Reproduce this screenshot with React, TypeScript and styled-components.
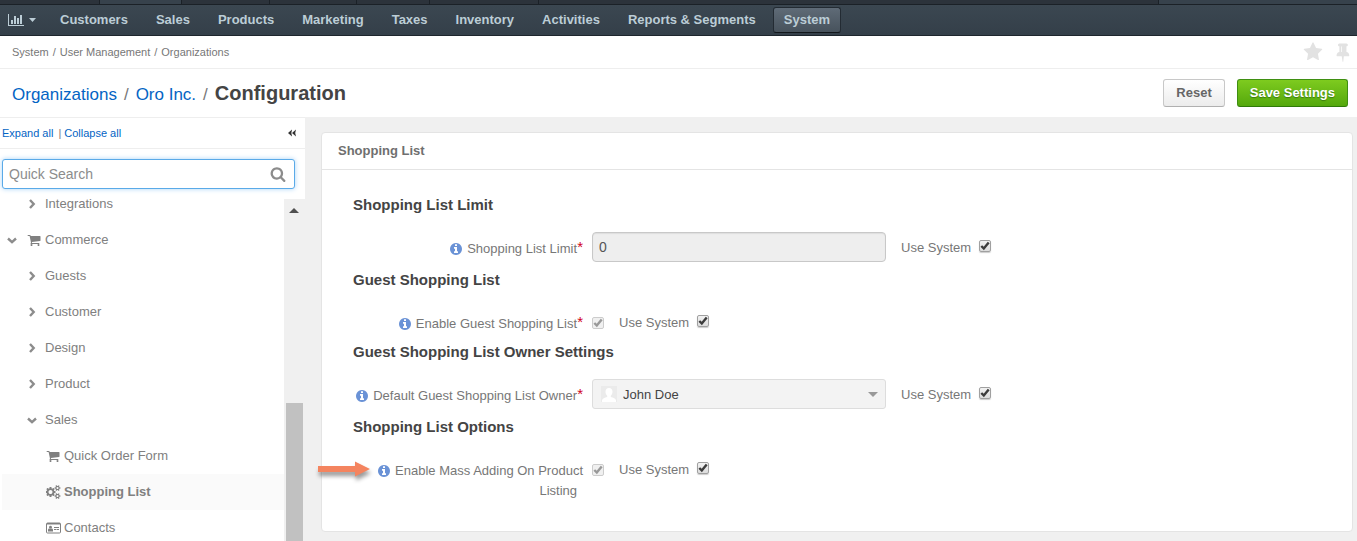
import React, { useState } from "react";
import styled, { createGlobalStyle } from "styled-components";

const GlobalStyle = createGlobalStyle`
  *, *::before, *::after { box-sizing: border-box; }
  body {
    margin: 0;
    background: #f0f0f0;
    color: #777;
    font: 13px/20px "Liberation Sans", Arial, sans-serif;
  }
  a { color: #0464c4; text-decoration: none; }
  ul, ol, h1, h2, h3 { margin: 0; padding: 0; list-style: none; font-weight: normal; }
  input, button, select { font-family: inherit; margin: 0; }
`;

/* ---------- icons ---------- */

type GlyphProps = { size?: number; box?: number; d: string };

const Glyph = ({ size = 14, box = 1792, d }: GlyphProps) => (
  <svg
    width={Math.round((size * box) / 1792)}
    height={size}
    viewBox={`0 0 ${box} 1792`}
    fill="currentColor"
    aria-hidden="true"
  >
    <path d={d} />
  </svg>
);

const paths = {
  chart:
    "M640 896v512h-256v-512h256zm384-512v1024h-256v-1024h256zm1024 1152v128h-2048v-1536h128v1408h1920zm-640-896v768h-256v-768h256zm384-384v1152h-256v-1152h256z",
  star: "M1728 647q0 22-26 48l-363 354 86 500q1 7 1 20 0 21-10.5 35.5t-30.5 14.5q-19 0-40-12l-449-236-449 236q-22 12-40 12-21 0-31.5-14.5t-10.5-35.5q0-6 2-20l86-500-364-354q-25-27-25-48 0-37 56-46l502-73 225-455q19-41 49-41t49 41l225 455 502 73q56 9 56 46z",
  pin: "M800 864v-448q0-14-9-23t-23-9-23 9-9 23v448q0 14 9 23t23 9 23-9 9-23zm672 352q0 26-19 45t-45 19h-429l-51 483q-2 12-10.5 20.5t-20.5 8.5h-1q-27 0-32-27l-76-485h-404q-26 0-45-19t-19-45q0-123 78.5-221.5t177.5-98.5v-512q-52 0-90-38t-38-90 38-90 90-38h640q52 0 90 38t38 90-38 90-90 38v512q99 0 177.5 98.5t78.5 221.5z",
  search:
    "M1216 832q0-185-131.5-316.5t-316.5-131.5-316.5 131.5-131.5 316.5 131.5 316.5 316.5 131.5 316.5-131.5 131.5-316.5zm512 832q0 52-38 90t-90 38q-54 0-90-38l-343-342q-179 124-399 124-143 0-273.5-55.5t-225-150-150-225-55.5-273.5 55.5-273.5 150-225 225-150 273.5-55.5 273.5 55.5 225 150 150 225 55.5 273.5q0 220-124 399l343 343q37 37 37 90z",
  cart: "M704 1536q0 52-38 90t-90 38-90-38-38-90 38-90 90-38 90 38 38 90zm896 0q0 52-38 90t-90 38-90-38-38-90 38-90 90-38 90 38 38 90zm128-1088v512q0 24-16.5 42.5t-40.5 21.5l-1044 122q13 60 13 70 0 16-24 64h920q26 0 45 19t19 45-19 45-45 19h-1024q-26 0-45-19t-19-45q0-11 8-31.5t16-36 21.5-40 15.5-29.5l-177-823h-204q-26 0-45-19t-19-45 19-45 45-19h256q16 0 28.5 6.5t19.5 15.5 13 24.5 8 26 5.5 29.5 4.5 26h1201q26 0 45 19t19 45z",
  info: "M1152 1376v-160q0-14-9-23t-23-9h-96v-512q0-14-9-23t-23-9h-320q-14 0-23 9t-9 23v160q0 14 9 23t23 9h96v320h-96q-14 0-23 9t-9 23v160q0 14 9 23t23 9h448q14 0 23-9t9-23zm-128-896v-160q0-14-9-23t-23-9h-192q-14 0-23 9t-9 23v160q0 14 9 23t23 9h192q14 0 23-9t9-23zm640 416q0 209-103 385.5t-279.5 279.5-385.5 103-385.5-103-279.5-279.5-103-385.5 103-385.5 279.5-279.5 385.5-103 385.5 103 279.5 279.5 103 385.5z",
  cogs: "M832 896q0-106-75-181t-181-75-181 75-75 181 75 181 181 75 181-75 75-181zm768 512q0-52-38-90t-90-38-90 38-38 90q0 53 37.5 90.5t90.5 37.5 90.5-37.5 37.5-90.5zm0-1024q0-52-38-90t-90-38-90 38-38 90q0 53 37.5 90.5t90.5 37.5 90.5-37.5 37.5-90.5zm-384 421v185q0 10-7 19.5t-16 10.5l-155 24q-11 35-32 76 34 48 90 115 7 11 7 20 0 12-7 19-23 30-82.5 89.5t-78.5 59.5q-11 0-21-7l-115-90q-37 19-77 31-11 108-23 155-7 24-30 24h-186q-11 0-20-7.5t-10-17.5l-23-153q-34-10-75-31l-118 89q-7 7-20 7-11 0-21-8-144-133-144-160 0-9 7-19 10-14 41-53t47-61q-23-44-35-82l-152-24q-10-1-17-9.5t-7-19.5v-185q0-10 7-19.5t16-10.5l155-24q11-35 32-76-34-48-90-115-7-11-7-20 0-12 7-20 22-30 82-89t79-59q11 0 21 7l115 90q34-18 77-32 11-108 23-154 7-24 30-24h186q11 0 20 7.5t10 17.5l23 153q34 10 75 31l118-89q8-7 20-7 11 0 21 8 144 133 144 160 0 8-7 19-12 16-42 54t-45 60q23 48 34 82l152 23q10 2 17 10.5t7 19.5zm640 533v140q0 16-149 31-12 27-30 52 51 113 51 138 0 4-4 7-122 71-124 71-8 0-46-47t-52-68q-20 2-30 2t-30-2q-14 21-52 68t-46 47q-2 0-124-71-4-3-4-7 0-25 51-138-18-25-30-52-149-15-149-31v-140q0-16 149-31 13-29 30-52-51-113-51-138 0-4 4-7 4-2 35-20t59-34 30-16q8 0 46 46.5t52 67.5q20-2 30-2t30 2q51-71 92-112l6-2q4 0 124 70 4 3 4 7 0 25-51 138 17 23 30 52 149 15 149 31zm0-1024v140q0 16-149 31-12 27-30 52 51 113 51 138 0 4-4 7-122 71-124 71-8 0-46-47t-52-68q-20 2-30 2t-30-2q-14 21-52 68t-46 47q-2 0-124-71-4-3-4-7 0-25 51-138-18-25-30-52-149-15-149-31v-140q0-16 149-31 13-29 30-52-51-113-51-138 0-4 4-7 4-2 35-20t59-34 30-16q8 0 46 46.5t52 67.5q20-2 30-2t30 2q51-71 92-112l6-2q4 0 124 70 4 3 4 7 0 25-51 138 17 23 30 52 149 15 149 31z",
};

const CardIcon = () => (
  <svg width="15" height="12" viewBox="0 0 15 12" aria-hidden="true">
    <rect x="0.5" y="1" width="14" height="10" rx="1" fill="none" stroke="currentColor" />
    <path d="M1 1h13v1.5H1z" fill="currentColor" />
    <circle cx="4.5" cy="5.2" r="1.4" fill="currentColor" />
    <path d="M2 9.500V8c0-1 .6-1.500 1.300-1.500h2.400C6.400 6.500 7 7 7 8v1.500z" fill="currentColor" />
    <path d="M8 5.500h5M8 7.500h2.500M11 7.500h2" stroke="currentColor" />
  </svg>
);

const Chevron = ({ open }: { open?: boolean }) => (
  <svg width="10" height="10" viewBox="0 0 10 10" fill="none" stroke="currentColor" strokeWidth="2.4" aria-hidden="true">
    {open ? <path d="M1 3.500l4 3.700 4-3.700" /> : <path d="M3 1l3.700 4L3 9" />}
  </svg>
);

const Caret = ({ width, height }: { width: number; height: number }) => (
  <svg width={width} height={height} viewBox="0 0 10 5" preserveAspectRatio="none" fill="currentColor" aria-hidden="true">
    <path d="M0 0h10L5 5z" />
  </svg>
);

const CollapseIcon = () => (
  <svg width="8" height="8" viewBox="0 0 8 8" fill="#333" aria-hidden="true">
    <path d="M4 0.500L3.400 4 4 7.500 0 4zM8 0.500L7.200 4 8 7.500 4 4z" />
  </svg>
);

/* ---------- page frame ---------- */

const Page = styled.div`
  display: flex;
  flex-direction: column;
  height: 100vh;
  overflow: hidden;
`;

const TabStrip = styled.div`
  display: flex;
  height: 5px;
  background: #2c333b;
  border-bottom: 1px solid #1b2127;
`;

const TabEdge = styled.div<{ $width?: number; $light?: boolean }>`
  flex: ${(p) => (p.$width ? `0 0 ${p.$width}px` : "1 1 0")};
  background: ${(p) => (p.$light ? "#37424c" : "#2c333b")};
  border-right: 1px solid ${(p) => (p.$width ? "#1b2127" : "transparent")};
`;

const NavBar = styled.nav`
  display: flex;
  align-items: center;
  height: 31px;
  padding-left: 8px;
  background: linear-gradient(#3b4751, #343f49);
  border-bottom: 1px solid #1e262d;
`;

const DashboardButton = styled.button`
  display: flex;
  align-items: center;
  gap: 5px;
  width: 41px;
  padding: 0;
  border: 0;
  background: none;
  color: #bccdd6;
  cursor: pointer;
`;

const NavList = styled.ul`
  display: flex;
  gap: 6px;
`;

const NavLink = styled.a<{ $active?: boolean }>`
  display: block;
  padding: 2px 10px;
  border: 1px solid ${(p) => (p.$active ? "#232b33" : "transparent")};
  border-bottom-color: ${(p) => (p.$active ? "#12171b" : "transparent")};
  border-radius: 3px;
  background: ${(p) => (p.$active ? "linear-gradient(#5f6b77, #47525c)" : "none")};
  color: #bccdd6;
  font-weight: bold;
  white-space: nowrap;
`;

const CrumbBar = styled.div`
  display: flex;
  align-items: center;
  justify-content: space-between;
  height: 33px;
  padding: 0 7px 0 12px;
  background: #fff;
  border-bottom: 1px solid #eee;
`;

const Crumbs = styled.ol`
  display: flex;
  gap: 4px;
  font-size: 11px;
`;

const CrumbTools = styled.div`
  display: flex;
  gap: 10px;
`;

const ToolButton = styled.button`
  display: flex;
  padding: 0;
  border: 0;
  background: none;
  color: #e2e2e2;
  cursor: pointer;
`;

const TitleBar = styled.header`
  display: flex;
  align-items: center;
  justify-content: space-between;
  height: 48px;
  padding: 0 9px 0 12px;
  background: #fff;
`;

const TitlePath = styled.div`
  display: flex;
  align-items: baseline;
  gap: 7px;
  padding-top: 2px;
  font-size: 17px;
  line-height: 24px;
`;

const Title = styled.h1`
  color: #444;
  font-size: 20px;
  font-weight: bold;
`;

const Actions = styled.div`
  display: flex;
  gap: 12px;
`;

const Button = styled.button<{ $primary?: boolean }>`
  height: 28px;
  padding: 0 12px 1px;
  border: 1px solid ${(p) => (p.$primary ? "#3f8f12" : "#c8c8c8")};
  border-bottom-color: ${(p) => (p.$primary ? "#2f7a08" : "#b0b0b0")};
  border-radius: 3px;
  background: ${(p) => (p.$primary ? "linear-gradient(#7ecb1f, #54a80c)" : "linear-gradient(#fff, #ececec)")};
  color: ${(p) => (p.$primary ? "#fff" : "#666")};
  text-shadow: ${(p) => (p.$primary ? "0 1px 1px #3b7a10" : "none")};
  font-size: 13px;
  font-weight: bold;
  cursor: pointer;
`;

const Content = styled.div`
  display: flex;
  flex: 1;
  min-height: 0;
`;

/* ---------- sidebar ---------- */

const Sidebar = styled.aside`
  display: flex;
  flex-direction: column;
  flex: 0 0 305px;
  background: #fff;
  border-top: 1px solid #eee;
`;

const SidebarTools = styled.div`
  display: flex;
  align-items: center;
  justify-content: space-between;
  height: 31px;
  padding: 0 9px 0 2px;
  border-bottom: 1px solid #eee;
  font-size: 11px;
`;

const ToolLinks = styled.div`
  display: flex;
`;

const Divider = styled.span`
  margin: 0 3px 0 5px;
`;

const SearchBox = styled.label`
  position: relative;
  display: block;
  padding: 10px 10px 10px 2px;
`;

const SearchInput = styled.input`
  display: block;
  width: 100%;
  height: 30px;
  padding: 0 30px 0 6px;
  border: 1px solid #5aaae8;
  border-radius: 3px;
  outline: 0;
  box-shadow: 0 0 5px #a9d4f7;
  color: #555;
  font-size: 14px;
  &::placeholder { color: #8c8c8c; opacity: 1; }
`;

const SearchIcon = styled.span`
  position: absolute;
  right: 19px;
  top: 17px;
  display: flex;
  color: #8c8c8c;
`;

const TreeArea = styled.div`
  display: flex;
  flex: 1;
  min-height: 0;
  overflow: hidden;
`;

const Tree = styled.ul`
  flex: 1;
  margin-top: -13px;
  padding-left: 2px;
`;

const TreeRow = styled.a<{ $level: number; $active?: boolean }>`
  display: flex;
  align-items: center;
  height: 36px;
  padding-left: ${(p) => [5, 25, 42][p.$level]}px;
  background: ${(p) => (p.$active ? "#fafafa" : "none")};
  color: #808080;
  font-weight: ${(p) => (p.$active ? "bold" : "normal")};
`;

const ToggleSlot = styled.span`
  display: flex;
  width: 10px;
  margin-right: 8px;
  color: #8c8c8c;
`;

const IconSlot = styled.span`
  display: flex;
  justify-content: center;
  width: 18px;
  margin-right: 2px;
`;

const ScrollTrack = styled.div`
  display: flex;
  flex-direction: column;
  justify-content: space-between;
  width: 21px;
  padding: 9px 2px 0;
  background: #f0f0f0;
  color: #505050;
`;

const ScrollUp = styled.span`
  display: flex;
  justify-content: center;
  transform: rotate(180deg);
`;

const ScrollThumb = styled.div`
  width: 17px;
  height: 41.5%;
  background: #c1c1c1;
`;

/* ---------- settings panel ---------- */

const Main = styled.main`
  flex: 1;
  min-width: 0;
  padding: 15px 4px 9px 16px;
`;

const Panel = styled.section`
  background: #fff;
  border: 1px solid #e4e4e4;
  border-radius: 4px;
`;

const PanelTitle = styled.h2`
  padding: 8px 16px;
  border-bottom: 1px solid #e4e4e4;
  color: #6f6f6f;
  font-size: 13px;
  font-weight: bold;
`;

const PanelBody = styled.div`
  padding: 25px 31px 22px;
`;

const GroupTitle = styled.h3`
  color: #444;
  font-size: 15px;
  font-weight: bold;
`;

const Field = styled.div`
  position: relative;
  display: flex;
  align-items: flex-start;
  min-height: 27px;
  margin: 17px 0 8px;
`;

const FieldLabel = styled.label`
  width: 230px;
  margin-right: 9px;
  padding-top: 7px;
  text-align: right;
`;

const InfoMark = styled.span`
  display: inline-block;
  height: 14px;
  margin-right: 4px;
  color: #6a92d6;
  vertical-align: -3px;
  svg { display: block; }
`;

const Required = styled.em`
  display: inline-block;
  width: 6px;
  color: #d0021b;
  font-size: 15px;
  font-style: normal;
  line-height: 12px;
  vertical-align: 1px;
`;

const ValueInput = styled.input`
  width: 294px;
  height: 30px;
  padding: 0 6px;
  border: 1px solid #c8c8c8;
  border-radius: 4px;
  background: #eee;
  box-shadow: inset 0 1px 1px #ddd;
  color: #555;
  font-size: 14px;
`;

const SelectBox = styled.div`
  position: relative;
  width: 294px;
`;

const Select = styled.select`
  display: block;
  appearance: none;
  width: 100%;
  height: 30px;
  padding: 0 30px;
  border: 1px solid #ddd;
  border-radius: 3px;
  background: #f3f3f3;
  color: #444;
  font-size: 13px;
  opacity: 1;
`;

const Avatar = styled.svg`
  position: absolute;
  left: 9px;
  top: 7px;
`;

const SelectCaret = styled.span`
  position: absolute;
  right: 8px;
  top: 13px;
  display: flex;
  color: #999;
`;

const TickBox = styled.span<{ $offset: number }>`
  position: relative;
  display: block;
  width: 12px;
  height: 12px;
  margin-top: ${(p) => p.$offset}px;
  svg {
    position: absolute;
    inset: 0;
    pointer-events: none;
  }
`;

const TickInput = styled.input`
  display: block;
  appearance: none;
  width: 12px;
  height: 12px;
  border: 1px solid #a0a0a0;
  border-radius: 2px;
  background: linear-gradient(#f2f2f2, #dcdcdc);
  box-shadow: 0 1px 1px #ccc;
  &:disabled {
    border-color: #ccc;
    background: #f0f0f0;
    box-shadow: none;
  }
`;

const UseSystemLabel = styled.label`
  display: flex;
  align-items: flex-start;
  gap: 8px;
  margin-left: 15px;
  padding-top: 6px;
`;

const Pointer = styled.svg`
  position: absolute;
  left: -36px;
  top: 7px;
  filter: drop-shadow(1px 4px 2px rgba(0, 0, 0, 0.4));
`;

type TickProps = { id?: string; checked: boolean; disabled?: boolean; offset: number; onToggle?: () => void };

const Tick = ({ id, checked, disabled, offset, onToggle }: TickProps) => (
  <TickBox $offset={offset}>
    <TickInput id={id} type="checkbox" checked={checked} disabled={disabled} onChange={() => onToggle?.()} />
    {checked && (
      <svg width="12" height="12" viewBox="0 0 12 12" fill="none" stroke={disabled ? "#999" : "#3c3c3c"} strokeWidth="2.400" aria-hidden="true">
        <path d="M2.300 6l2.500 2.500 4.900-6" />
      </svg>
    )}
  </TickBox>
);

const UseSystem = () => {
  const [on, setOn] = useState(true);
  return (
    <UseSystemLabel>
      Use System
      <Tick checked={on} offset={2} onToggle={() => setOn(!on)} />
    </UseSystemLabel>
  );
};

type SettingProps = { id: string; label: string; required?: boolean; pointed?: boolean; children: React.ReactNode };

const Setting = ({ id, label, required, pointed, children }: SettingProps) => (
  <Field>
    {pointed && (
      <Pointer width="54" height="16" viewBox="0 0 54 16" aria-hidden="true">
        <path d="M1 5h37V0.500l15 7.500-15 7.500V11H1z" fill="#f4845f" />
      </Pointer>
    )}
    <FieldLabel htmlFor={id}>
      <InfoMark>
        <Glyph d={paths.info} />
      </InfoMark>
      {label}
      <Required>{required ? "*" : ""}</Required>
    </FieldLabel>
    {children}
    <UseSystem />
  </Field>
);

const sections = ["Customers", "Sales", "Products", "Marketing", "Taxes", "Inventory", "Activities", "Reports & Segments", "System"];

type Node = { label: string; level: number; open?: boolean; icon?: React.ReactNode; active?: boolean };

const cart = <Glyph d={paths.cart} />;
const nodes: Node[] = [
  { label: "Integrations", level: 1 },
  { label: "Commerce", level: 0, open: true, icon: cart },
  { label: "Guests", level: 1 },
  { label: "Customer", level: 1 },
  { label: "Design", level: 1 },
  { label: "Product", level: 1 },
  { label: "Sales", level: 1, open: true },
  { label: "Quick Order Form", level: 2, icon: cart },
  { label: "Shopping List", level: 2, icon: <Glyph box={1920} d={paths.cogs} />, active: true },
  { label: "Contacts", level: 2, icon: <CardIcon /> },
];

export default function App() {
  return (
    <>
      <GlobalStyle />
      <Page>
        <TabStrip>
          <TabEdge $width={100} />
          <TabEdge $width={82} $light />
          <TabEdge $width={88} />
          <TabEdge $width={87} />
          <TabEdge $width={73} />
          <TabEdge $width={109} />
          <TabEdge $width={620} />
          <TabEdge $light />
        </TabStrip>
        <NavBar>
          <DashboardButton aria-label="Dashboards">
            <Glyph box={2048} d={paths.chart} />
            <Caret width={7} height={4} />
          </DashboardButton>
          <NavList>
            {sections.map((name) => (
              <li key={name}>
                <NavLink href="#" $active={name === "System"}>
                  {name}
                </NavLink>
              </li>
            ))}
          </NavList>
        </NavBar>
        <CrumbBar>
          <Crumbs>
            <li>System</li>
            <li>/</li>
            <li>User Management</li>
            <li>/</li>
            <li>Organizations</li>
          </Crumbs>
          <CrumbTools>
            <ToolButton aria-label="Add to favorites">
              <Glyph size={20} d={paths.star} />
            </ToolButton>
            <ToolButton aria-label="Pin page">
              <Glyph size={20} box={1536} d={paths.pin} />
            </ToolButton>
          </CrumbTools>
        </CrumbBar>
        <TitleBar>
          <TitlePath>
            <a href="#">Organizations</a>
            <span>/</span>
            <a href="#">Oro Inc.</a>
            <span>/</span>
            <Title>Configuration</Title>
          </TitlePath>
          <Actions>
            <Button type="reset">Reset</Button>
            <Button type="submit" $primary>
              Save Settings
            </Button>
          </Actions>
        </TitleBar>
        <Content>
          <Sidebar>
            <SidebarTools>
              <ToolLinks>
                <a href="#">Expand all</a>
                <Divider>|</Divider>
                <a href="#">Collapse all</a>
              </ToolLinks>
              <ToolButton aria-label="Collapse sidebar">
                <CollapseIcon />
              </ToolButton>
            </SidebarTools>
            <SearchBox>
              <SearchInput placeholder="Quick Search" aria-label="Quick Search" />
              <SearchIcon>
                <Glyph size={16} d={paths.search} />
              </SearchIcon>
            </SearchBox>
            <TreeArea>
              <Tree>
                {nodes.map((n) => (
                  <li key={n.label}>
                    <TreeRow href="#" $level={n.level} $active={n.active}>
                      {n.level < 2 && (
                        <ToggleSlot>
                          <Chevron open={n.open} />
                        </ToggleSlot>
                      )}
                      {n.icon && <IconSlot>{n.icon}</IconSlot>}
                      {n.label}
                    </TreeRow>
                  </li>
                ))}
              </Tree>
              <ScrollTrack>
                <ScrollUp>
                  <Caret width={10} height={5} />
                </ScrollUp>
                <ScrollThumb />
              </ScrollTrack>
            </TreeArea>
          </Sidebar>
          <Main>
            <Panel>
              <PanelTitle>Shopping List</PanelTitle>
              <PanelBody>
                <GroupTitle>Shopping List Limit</GroupTitle>
                <Setting id="limit" label="Shopping List Limit" required>
                  <ValueInput id="limit" defaultValue="0" disabled />
                </Setting>
                <GroupTitle>Guest Shopping List</GroupTitle>
                <Setting id="guest" label="Enable Guest Shopping List" required>
                  <Tick id="guest" checked disabled offset={10} />
                </Setting>
                <GroupTitle>Guest Shopping List Owner Settings</GroupTitle>
                <Setting id="owner" label="Default Guest Shopping List Owner" required>
                  <SelectBox>
                    <Select id="owner" disabled>
                      <option>John Doe</option>
                    </Select>
                    <Avatar width="16" height="16" viewBox="0 0 16 16" aria-hidden="true">
                      <path d="M0 0h16v16H0z" fill="#ebebeb" />
                      <path d="M8 2c2.200 0 3.500 1.500 3.500 3.800 0 1.700-.7 3-1.700 3.900v1.300c2.600.8 4.700 1.500 5.200 3.200V16H1v-1.800c.5-1.700 2.600-2.400 5.200-3.200V9.700C5.200 8.800 4.500 7.500 4.500 5.800 4.500 3.500 5.800 2 8 2z" fill="#fff" />
                    </Avatar>
                    <SelectCaret>
                      <Caret width={10} height={5} />
                    </SelectCaret>
                  </SelectBox>
                </Setting>
                <GroupTitle>Shopping List Options</GroupTitle>
                <Setting id="mass" label="Enable Mass Adding On Product Listing" pointed>
                  <Tick id="mass" checked disabled offset={10} />
                </Setting>
              </PanelBody>
            </Panel>
          </Main>
        </Content>
      </Page>
    </>
  );
}
